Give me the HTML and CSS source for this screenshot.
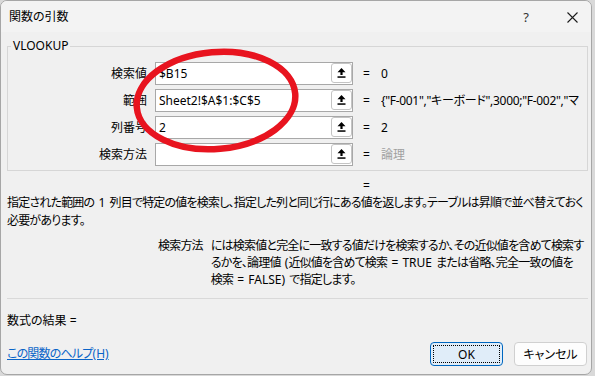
FILE: index.html
```html
<!DOCTYPE html>
<html lang="ja">
<head>
<meta charset="utf-8">
<title>関数の引数</title>
<link rel="stylesheet" href="styles.css">
</head>
<body>
<div class="window">
  <div class="titlebar">
    <span class="title">関数の引数</span>
    <span class="tb-help">?</span>
    <span class="tb-close"><svg width="11" height="11" viewBox="0 0 11 11"><path d="M0.5 0.5 L10.5 10.5 M10.5 0.5 L0.5 10.5" stroke="#1b1b1b" stroke-width="1.1" fill="none"/></svg></span>
  </div>

  <fieldset class="args">
    <legend>VLOOKUP</legend>
    <div class="row">
      <span class="lbl">検索値</span>
      <div class="field"><span class="ftext">$B15</span><span class="ref"><svg width="9" height="10" viewBox="0 0 9 10"><path d="M4.5 0 L8.5 4.3 L5.6 4.3 L5.6 7 L3.4 7 L3.4 4.3 L0.5 4.3 Z" fill="#000"/><rect x="0.5" y="8.3" width="8" height="1.5" fill="#000"/></svg></span></div>
      <span class="eq">=</span>
      <span class="val">0</span>
    </div>
    <div class="row">
      <span class="lbl">範囲</span>
      <div class="field"><span class="ftext">Sheet2!$A$1:$C$5</span><span class="ref"><svg width="9" height="10" viewBox="0 0 9 10"><path d="M4.5 0 L8.5 4.3 L5.6 4.3 L5.6 7 L3.4 7 L3.4 4.3 L0.5 4.3 Z" fill="#000"/><rect x="0.5" y="8.3" width="8" height="1.5" fill="#000"/></svg></span></div>
      <span class="eq">=</span>
      <span class="val tight">{"F-001","キーボード",3000;"F-002","マウス",1500;"F-003","モニター",20000}</span>
    </div>
    <div class="row">
      <span class="lbl">列番号</span>
      <div class="field"><span class="ftext">2</span><span class="ref"><svg width="9" height="10" viewBox="0 0 9 10"><path d="M4.5 0 L8.5 4.3 L5.6 4.3 L5.6 7 L3.4 7 L3.4 4.3 L0.5 4.3 Z" fill="#000"/><rect x="0.5" y="8.3" width="8" height="1.5" fill="#000"/></svg></span></div>
      <span class="eq">=</span>
      <span class="val">2</span>
    </div>
    <div class="row">
      <span class="lbl">検索方法</span>
      <div class="field"><span class="ftext"></span><span class="ref"><svg width="9" height="10" viewBox="0 0 9 10"><path d="M4.5 0 L8.5 4.3 L5.6 4.3 L5.6 7 L3.4 7 L3.4 4.3 L0.5 4.3 Z" fill="#000"/><rect x="0.5" y="8.3" width="8" height="1.5" fill="#000"/></svg></span></div>
      <span class="eq">=</span>
      <span class="val muted">論理</span>
    </div>
  </fieldset>

  <div class="result-eq">=</div>
  <p class="desc">指定された範囲の<span class="lat"> 1 </span>列目で特定の値を検索し、指定した列と同じ行にある値を返します。テーブルは昇順で並べ替えておく<br>必要があります。</p>

  <div class="argdesc">
    <span class="argname">検索方法</span>
    <p class="argtext">には検索値と完全に一致する値だけを検索するか、その近似値を含めて検索す<br>るかを、論理値<span class="lat"> (</span>近似値を含めて検索<span class="lat"> = TRUE </span>または省略、完全一致の値を<br>検索<span class="lat"> = FALSE) </span>で指定します。</p>
  </div>

  <div class="sep"></div>
  <div class="formula">数式の結果 =</div>

  <div class="footer">
    <a class="help" href="#">この関数のヘルプ<span class="lat">(H)</span></a>
    <button class="btn ok">OK</button>
    <button class="btn cancel">キャンセル</button>
  </div>

  <svg class="marker" width="595" height="376" viewBox="0 0 595 376">
    <ellipse cx="216" cy="100.5" rx="79.5" ry="48.5" transform="rotate(-5 216 100.5)" fill="none" stroke="#e8141f" stroke-width="6.5"/>
  </svg>
</div>
</body>
</html>
```

FILE: styles.css
```css
html, body {
  margin: 0;
  padding: 0;
}

body {
  width: 595px;
  height: 376px;
  overflow: hidden;
  background: #d9d9d9;
  font-family: "Noto Sans", "Noto Sans CJK JP", sans-serif;
  font-size: 12px;
  color: #000;
  font-feature-settings: "palt";
}

.window {
  position: relative;
  box-sizing: border-box;
  width: 592px;
  height: 375px;
  background: #f0f0f0;
  border: 1px solid #a6a6a6;
  border-radius: 7px;
  display: flex;
  flex-direction: column;
  overflow: hidden;
}

.titlebar {
  height: 31px;
  flex: none;
  display: flex;
  align-items: center;
  background: #f3f3f3;
  padding-left: 8px;
  padding-top: 1px;
  box-sizing: border-box;
}

.title {
  flex: 1;
  line-height: 16px;
}

.tb-help {
  width: 20px;
  text-align: center;
  font-size: 13px;
  color: #333;
  line-height: 16px;
}

.tb-close {
  width: 20px;
  margin-left: 26px;
  margin-right: 9px;
  display: flex;
  justify-content: center;
  align-items: center;
}

.args {
  margin: 6px 3px 0 6px;
  padding: 8px 0 4px 0;
  border: 1px solid #d6d6d6;
  min-width: 0;
  display: flex;
  flex-direction: column;
  gap: 4px;
}

.args legend {
  margin-left: 3px;
  padding: 0 2px;
  line-height: 16px;
}

.row {
  display: flex;
  align-items: center;
  height: 23px;
  padding-right: 8px;
}

.lbl {
  width: 139px;
  flex: none;
  text-align: right;
  margin-right: 8px;
  line-height: 16px;
}

.field {
  flex: none;
  width: 198px;
  height: 23px;
  box-sizing: border-box;
  background: #fff;
  border: 1px solid #a8a8a8;
  display: flex;
  align-items: flex-start;
}

.ftext {
  flex: 1;
  padding-left: 3px;
  line-height: 21px;
  white-space: nowrap;
  overflow: hidden;
}

.ref {
  width: 21px;
  height: 20px;
  box-sizing: border-box;
  border: 1px solid #c4c4c4;
  border-radius: 3px;
  background: #fff;
  display: flex;
  justify-content: center;
  align-items: center;
}

.eq {
  margin-left: 10px;
  flex: none;
  line-height: 16px;
}

.val {
  margin-left: 11px;
  flex: 1;
  min-width: 0;
  white-space: nowrap;
  overflow: hidden;
  line-height: 16px;
}

.tight {
  letter-spacing: -0.3px;
}

.muted {
  color: #a0a0a0;
}

.result-eq {
  margin-top: 7px;
  padding-left: 362px;
  line-height: 16px;
}

.desc {
  margin: 0;
  padding-left: 6px;
  line-height: 18px;
  white-space: nowrap;
  letter-spacing: -0.8px;
}

.lat {
  letter-spacing: 0;
  word-spacing: 1px;
}

.argdesc {
  margin-top: 7px;
  display: flex;
  padding-left: 157px;
}

.argname {
  flex: none;
  line-height: 17px;
  margin-right: 8px;
  letter-spacing: -0.8px;
}

.argtext {
  margin: 0;
  line-height: 17px;
  white-space: nowrap;
  letter-spacing: -0.8px;
}

.sep {
  margin: 10px 3px 0 6px;
  height: 0;
  border-top: 1px solid #d9d9d9;
}

.formula {
  margin-top: 14px;
  padding-left: 6px;
  line-height: 16px;
}

.footer {
  margin-top: 13px;
  height: 24px;
  display: flex;
  align-items: center;
  padding-left: 6px;
  padding-right: 4px;
}

.help {
  color: #0a64c8;
  text-decoration: underline;
  line-height: 16px;
  margin-right: auto;
  letter-spacing: -0.8px;
}

.btn {
  width: 73px;
  height: 24px;
  box-sizing: border-box;
  font-family: inherit;
  font-size: 12px;
  font-feature-settings: "palt";
  color: #000;
  border-radius: 4px;
  padding: 0;
}

.ok {
  background: #e0edf9;
  border: 1px solid #0067c0;
  outline: 1px dotted #000;
  outline-offset: -4px;
}

.cancel {
  margin-left: 11px;
  background: #fdfdfd;
  border: 1px solid #d0d0d0;
}

.marker {
  position: absolute;
  top: -1px;
  left: -1px;
  pointer-events: none;
}
```
